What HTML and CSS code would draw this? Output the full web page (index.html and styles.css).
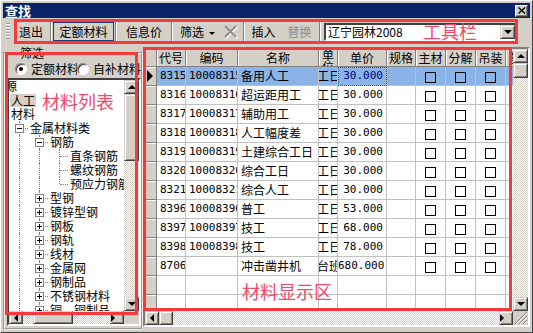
FILE: index.html
```html
<!DOCTYPE html>
<html lang="zh-CN">
<head>
  <meta charset="UTF-8" />
  <title>查找</title>
  <link rel="stylesheet" href="styles.css">
</head>
<body>
  <div class="window">
    <div class="titlebar">
      <span class="title">查找</span>
      <span class="close-btn">
        <svg width="8" height="7" viewBox="0 0 8 7"><path d="M0.5 0.5 L7 6.5 M7 0.5 L0.5 6.5" stroke="#000" stroke-width="1.4"/></svg>
      </span>
    </div>

    <div class="toolbar">
      <span class="grip"></span>
      <span class="tb-btn btn-exit">退出</span>
      <span class="tb-sep"></span>
      <span class="tb-btn btn-quota checked">定额材料</span>
      <span class="tb-sep"></span>
      <span class="tb-btn btn-info">信息价</span>
      <span class="tb-sep"></span>
      <span class="tb-btn btn-filter">筛选<i class="caret"></i></span>
      <span class="tb-btn btn-clear">
        <svg width="15" height="15" viewBox="0 0 15 15">
          <path d="M2 2 L13 13 M13 2 L2 13" stroke="#fff" stroke-width="2" transform="translate(1 1)"/>
          <path d="M2 2 L13 13 M13 2 L2 13" stroke="#8c8c8c" stroke-width="2"/>
        </svg>
      </span>
      <span class="tb-sep"></span>
      <span class="tb-btn btn-insert">插入</span>
      <span class="tb-btn btn-replace disabled">替换</span>
      <span class="tb-sep"></span>
      <div class="combo">
        <span class="combo-text">辽宁园林2008</span>
        <span class="sb-btn combo-btn"><i class="arr down"></i></span>
      </div>
    </div>

    <div class="main">
      <div class="left">
        <fieldset class="filter">
          <legend>筛选</legend>
          <div class="radios">
            <label class="radio-opt first"><span class="radio on"></span>定额材料</label>
            <label class="radio-opt second"><span class="radio"></span>自补材料</label>
          </div>
          <div class="tree-box">
            <div class="tree">
              <div class="tree-rows">
                <div class="node"><span class="t clip">源</span></div>
                <div class="node"><span class="t sel">人工</span></div>
                <div class="node"><span class="t">材料</span></div>
                <div class="node"><span class="ind v h"><i class="exp"></i></span><span class="t">金属材料类</span></div>
                <div class="node"><span class="ind v"></span><span class="ind v h"><i class="exp"></i></span><span class="t">钢筋</span></div>
                <div class="node"><span class="ind v"></span><span class="ind v"></span><span class="ind v h"></span><span class="t">直条钢筋</span></div>
                <div class="node"><span class="ind v"></span><span class="ind v"></span><span class="ind v h"></span><span class="t">螺纹钢筋</span></div>
                <div class="node"><span class="ind v"></span><span class="ind v"></span><span class="ind vt h"></span><span class="t">预应力钢筋</span></div>
                <div class="node"><span class="ind v"></span><span class="ind v h"><i class="exp plus"></i></span><span class="t">型钢</span></div>
                <div class="node"><span class="ind v"></span><span class="ind v h"><i class="exp plus"></i></span><span class="t">镀锌型钢</span></div>
                <div class="node"><span class="ind v"></span><span class="ind v h"><i class="exp plus"></i></span><span class="t">钢板</span></div>
                <div class="node"><span class="ind v"></span><span class="ind v h"><i class="exp plus"></i></span><span class="t">钢轨</span></div>
                <div class="node"><span class="ind v"></span><span class="ind v h"><i class="exp plus"></i></span><span class="t">线材</span></div>
                <div class="node"><span class="ind v"></span><span class="ind v h"><i class="exp plus"></i></span><span class="t">金属网</span></div>
                <div class="node"><span class="ind v"></span><span class="ind v h"><i class="exp plus"></i></span><span class="t">钢制品</span></div>
                <div class="node"><span class="ind v"></span><span class="ind v h"><i class="exp plus"></i></span><span class="t">不锈钢材料</span></div>
                <div class="node"><span class="ind v"></span><span class="ind v h"><i class="exp plus"></i></span><span class="t">铜、铜制品</span></div>
              </div>
            </div>
            <div class="vscroll">
              <span class="sb-btn"><i class="arr up"></i></span>
              <span class="sb-thumb tree-vthumb"></span>
              <span class="sb-track"></span>
              <span class="sb-btn"><i class="arr down"></i></span>
            </div>
            <div class="hscroll">
              <span class="sb-btn"><i class="arr left"></i></span>
              <span class="sb-track tree-htrack"></span>
              <span class="sb-thumb tree-hthumb"></span>
              <span class="sb-track"></span>
              <span class="sb-btn"><i class="arr right"></i></span>
            </div>
            <div class="corner"></div>
          </div>
        </fieldset>
      </div>

      <div class="splitter"></div>

      <div class="right">
        <div class="grid-box">
          <div class="grid-view">
            <table class="grid">
              <colgroup>
                <col class="c-rh"><col class="c-code"><col class="c-no"><col class="c-name"><col class="c-unit">
                <col class="c-price"><col class="c-spec"><col class="c-chk"><col class="c-chk"><col class="c-chk"><col class="c-more">
              </colgroup>
              <thead>
                <tr>
                  <th class="rh"></th><th>代号</th><th>编码</th><th>名称</th>
                  <th class="unit-h"><div>单位</div></th>
                  <th>单价</th><th>规格</th><th>主材</th><th>分解</th><th>吊装</th><th>备注</th>
                </tr>
              </thead>
              <tbody>
                <tr class="sel">
                  <td class="rh"><i class="ptr"></i></td><td class="mono">8315</td><td class="mono">10008315</td><td>备用人工</td>
                  <td class="unit"><span>工日</span></td><td class="mono num focus">30.000</td><td></td>
                  <td class="chk"><i></i></td><td class="chk"><i></i></td><td class="chk"><i></i></td><td></td>
                </tr>
                <tr>
                  <td class="rh"></td><td class="mono">8316</td><td class="mono">10008316</td><td>超运距用工</td>
                  <td class="unit"><span>工日</span></td><td class="mono num">30.000</td><td></td>
                  <td class="chk"><i></i></td><td class="chk"><i></i></td><td class="chk"><i></i></td><td></td>
                </tr>
                <tr>
                  <td class="rh"></td><td class="mono">8317</td><td class="mono">10008317</td><td>辅助用工</td>
                  <td class="unit"><span>工日</span></td><td class="mono num">30.000</td><td></td>
                  <td class="chk"><i></i></td><td class="chk"><i></i></td><td class="chk"><i></i></td><td></td>
                </tr>
                <tr>
                  <td class="rh"></td><td class="mono">8318</td><td class="mono">10008318</td><td>人工幅度差</td>
                  <td class="unit"><span>工日</span></td><td class="mono num">30.000</td><td></td>
                  <td class="chk"><i></i></td><td class="chk"><i></i></td><td class="chk"><i></i></td><td></td>
                </tr>
                <tr>
                  <td class="rh"></td><td class="mono">8319</td><td class="mono">10008319</td><td>土建综合工日</td>
                  <td class="unit"><span>工日</span></td><td class="mono num">30.000</td><td></td>
                  <td class="chk"><i></i></td><td class="chk"><i></i></td><td class="chk"><i></i></td><td></td>
                </tr>
                <tr>
                  <td class="rh"></td><td class="mono">8320</td><td class="mono">10008320</td><td>综合工日</td>
                  <td class="unit"><span>工日</span></td><td class="mono num">30.000</td><td></td>
                  <td class="chk"><i></i></td><td class="chk"><i></i></td><td class="chk"><i></i></td><td></td>
                </tr>
                <tr>
                  <td class="rh"></td><td class="mono">8321</td><td class="mono">10008321</td><td>综合人工</td>
                  <td class="unit"><span>工日</span></td><td class="mono num">30.000</td><td></td>
                  <td class="chk"><i></i></td><td class="chk"><i></i></td><td class="chk"><i></i></td><td></td>
                </tr>
                <tr>
                  <td class="rh"></td><td class="mono">8396</td><td class="mono">10008396</td><td>普工</td>
                  <td class="unit"><span>工日</span></td><td class="mono num">53.000</td><td></td>
                  <td class="chk"><i></i></td><td class="chk"><i></i></td><td class="chk"><i></i></td><td></td>
                </tr>
                <tr>
                  <td class="rh"></td><td class="mono">8397</td><td class="mono">10008397</td><td>技工</td>
                  <td class="unit"><span>工日</span></td><td class="mono num">68.000</td><td></td>
                  <td class="chk"><i></i></td><td class="chk"><i></i></td><td class="chk"><i></i></td><td></td>
                </tr>
                <tr>
                  <td class="rh"></td><td class="mono">8398</td><td class="mono">10008398</td><td>技工</td>
                  <td class="unit"><span>工日</span></td><td class="mono num">78.000</td><td></td>
                  <td class="chk"><i></i></td><td class="chk"><i></i></td><td class="chk"><i></i></td><td></td>
                </tr>
                <tr>
                  <td class="rh"></td><td class="mono">8706</td><td class="mono"></td><td>冲击凿井机</td>
                  <td class="unit"><span>台班</span></td><td class="mono num">680.000</td><td></td>
                  <td class="chk"><i></i></td><td class="chk"><i></i></td><td class="chk"><i></i></td><td></td>
                </tr>
                <tr>
                  <td class="rh"></td><td></td><td></td><td></td><td></td><td></td><td></td><td></td><td></td><td></td><td></td>
                </tr>
                <tr>
                  <td class="rh"></td><td></td><td></td><td></td><td></td><td></td><td></td><td></td><td></td><td></td><td></td>
                </tr>
              </tbody>
            </table>
          </div>
          <div class="vscroll">
            <span class="sb-btn"><i class="arr up"></i></span>
            <span class="sb-thumb grid-vthumb"></span>
            <span class="sb-track"></span>
            <span class="sb-btn"><i class="arr down"></i></span>
          </div>
          <div class="hscroll">
            <span class="sb-btn"><i class="arr left"></i></span>
            <span class="sb-thumb grid-hthumb"></span>
            <span class="sb-track"></span>
            <span class="sb-btn"><i class="arr right"></i></span>
          </div>
          <div class="corner">
            <svg width="15" height="14" viewBox="0 0 15 14">
              <path d="M14 1 L2 13 M14 5 L6 13 M14 9 L10 13" stroke="#808080"/>
              <path d="M14 2 L3 13 M14 6 L7 13 M14 10 L11 13" stroke="#fff"/>
            </svg>
          </div>
        </div>
      </div>
    </div>

    <!-- annotations drawn over the screenshot -->
    <div class="note-box note-toolbar"></div>
    <div class="note-box note-list"></div>
    <div class="note-box note-grid"></div>
    <span class="note-text note-toolbar-text">工具栏</span>
    <span class="note-text note-list-text">材料列表</span>
    <span class="note-text note-grid-text">材料显示区</span>
  </div>
</body>
</html>
```

FILE: styles.css
```css
:root {
  --face: #d4d0c8;
  --shadow: #808080;
  --dark: #404040;
  --title: #0a246a;
  --note: #f53a3e;
}

* {
  box-sizing: border-box;
}

body {
  margin: 0;
  background: var(--face);
  font-family: "Noto Sans CJK SC", sans-serif;
  font-size: 12px;
  color: #000;
}

.window {
  position: relative;
  width: 533px;
  height: 333px;
  padding: 2px;
  border: 1px solid;
  border-color: #fff var(--dark) var(--dark) #fff;
  background: var(--face);
  display: flex;
  flex-direction: column;
  overflow: hidden;
}

/* title bar */
.titlebar {
  height: 15px;
  flex: none;
  background: var(--title);
  display: flex;
  align-items: center;
  justify-content: space-between;
  padding-left: 2px;
}

.title {
  color: #fff;
  font-weight: bold;
  font-size: 13px;
  line-height: 15px;
}

.close-btn {
  width: 13px;
  height: 12px;
  margin-right: 2px;
  background: var(--face);
  border: 1px solid;
  border-color: #fff var(--dark) var(--dark) #fff;
  box-shadow: inset -1px -1px var(--shadow);
  display: flex;
  align-items: center;
  justify-content: center;
}

.close-btn svg {
  display: block;
}

/* toolbar */
.toolbar {
  height: 26px;
  flex: none;
  display: flex;
  align-items: flex-start;
  padding: 4px 0 0 3px;
}

.grip {
  width: 4px;
  height: 16px;
  margin: 1px 3px 0 0;
  background: repeating-linear-gradient(to bottom, #9a9a9a 0 1px, #fff 1px 2px, transparent 2px 3px);
}

.tb-btn {
  height: 19px;
  line-height: 19px;
  text-align: center;
  flex: none;
  white-space: nowrap;
}

.btn-exit { width: 36px; }
.btn-quota { width: 61px; }
.btn-info { width: 52px; }
.btn-filter { width: 44px; text-align: left; padding-left: 6px; }
.btn-clear { width: 24px; display: flex; align-items: center; justify-content: center; }
.btn-insert { width: 35px; }
.btn-replace { width: 37px; }

.tb-btn.checked {
  border: 1px solid #24366e;
  line-height: 17px;
}

.tb-btn.disabled {
  color: #8c8c8c;
}

.caret {
  display: inline-block;
  width: 0;
  height: 0;
  margin-left: 5px;
  vertical-align: middle;
  border-left: 3px solid transparent;
  border-right: 3px solid transparent;
  border-top: 3px solid #000;
}

.tb-sep {
  width: 2px;
  height: 19px;
  margin: 0 1px;
  flex: none;
  border-left: 1px solid var(--shadow);
  border-right: 1px solid #fff;
}

.combo {
  width: 193px;
  height: 18px;
  margin: 1px 0 0 2px;
  background: #fff;
  border: 2px solid;
  border-color: var(--dark) #fff #fff var(--dark);
  display: flex;
  align-items: center;
}

.combo-text {
  padding-left: 2px;
  line-height: 14px;
}

.combo-btn {
  margin-left: auto;
  width: 15px;
  height: 14px;
}

/* main area */
.main {
  flex: 1;
  min-height: 0;
  display: flex;
}

.left {
  width: 136px;
  flex: none;
  display: flex;
  flex-direction: column;
}

.filter {
  flex: 1;
  min-height: 0;
  margin: 0;
  padding: 0 0 2px 2px;
  border: 2px groove #eeece8;
  display: flex;
  flex-direction: column;
}

.filter legend {
  margin-left: 11px;
  padding: 0 2px;
  line-height: 17px;
}

.radios {
  height: 16px;
  padding-left: 8px;
  display: flex;
  align-items: center;
  white-space: nowrap;
}

.radio-opt {
  display: flex;
  align-items: center;
  gap: 4px;
  overflow: hidden;
  line-height: 14px;
}

.radio-opt.first {
  width: 62px;
  flex: none;
}

.radio-opt.second {
  flex: 1;
  min-width: 0;
}

.radio {
  position: relative;
  width: 12px;
  height: 12px;
  flex: none;
  border-radius: 50%;
  background: #fff;
  border: 1px solid;
  border-color: var(--shadow) #fff #fff var(--shadow);
  box-shadow: inset 1px 1px var(--dark);
}

.radio.on::after {
  content: "";
  position: absolute;
  left: 3px;
  top: 3px;
  width: 4px;
  height: 4px;
  border-radius: 50%;
  background: #000;
}

/* tree */
.tree-box {
  flex: 1;
  min-height: 0;
  margin-top: 1px;
  border: 2px solid;
  border-color: var(--dark) #fff #fff var(--dark);
  display: grid;
  grid-template-columns: 1fr 15px;
  grid-template-rows: 1fr 13px;
}

.tree {
  background: #fff;
  overflow: hidden;
  min-width: 0;
}

.tree-rows {
  margin-top: -1px;
}

.node {
  height: 14px;
  line-height: 14px;
  display: flex;
  white-space: nowrap;
}

.node .t {
  padding-left: 1px;
}

.node > .t:first-child {
  margin-left: 1px;
}

.node .t.clip {
  margin-left: -5px;
}

.node .t.sel {
  background: var(--face);
  padding: 0 1px;
  height: 13px;
  line-height: 13px;
  margin-top: 1px;
}

.ind {
  position: relative;
  width: 20px;
  height: 14px;
  flex: none;
}

.ind.v::before,
.ind.vt::before {
  content: "";
  position: absolute;
  left: 10px;
  top: 0;
  bottom: 0;
  border-left: 1px dotted var(--shadow);
}

.ind.vt::before {
  bottom: 7px;
}

.ind.h::after {
  content: "";
  position: absolute;
  left: 11px;
  right: 1px;
  top: 7px;
  border-top: 1px dotted var(--shadow);
}

.exp {
  position: absolute;
  z-index: 1;
  left: 6px;
  top: 3px;
  width: 9px;
  height: 9px;
  border: 1px solid var(--shadow);
  background: #fff;
}

.exp::before {
  content: "";
  position: absolute;
  left: 1px;
  top: 3px;
  width: 5px;
  height: 1px;
  background: #000;
}

.exp.plus::after {
  content: "";
  position: absolute;
  left: 3px;
  top: 1px;
  width: 1px;
  height: 5px;
  background: #000;
}

/* scroll bars */
.vscroll {
  display: flex;
  flex-direction: column;
  min-height: 0;
}

.hscroll {
  display: flex;
  min-width: 0;
}

.sb-btn,
.sb-thumb {
  flex: none;
  background: var(--face);
  border: 1px solid;
  border-color: var(--face) var(--dark) var(--dark) var(--face);
  box-shadow: inset 1px 1px #fff, inset -1px -1px var(--shadow);
  display: flex;
  align-items: center;
  justify-content: center;
}

.vscroll .sb-btn { height: 14px; }
.hscroll .sb-btn { width: 14px; }

.sb-track {
  flex: 1;
  background: repeating-conic-gradient(var(--face) 0 25%, #fff 0 50%) 0 0 / 2px 2px;
}

.tree-vthumb { height: 67px; }
.grid-vthumb { height: 15px; }
.tree-htrack { flex: none; width: 10px; }
.tree-hthumb { width: 40px; }
.grid-hthumb { width: 14px; }

.corner {
  background: var(--face);
}

.corner svg {
  display: block;
}

.arr {
  width: 0;
  height: 0;
}

.arr.up {
  border-left: 4px solid transparent;
  border-right: 4px solid transparent;
  border-bottom: 4px solid #000;
}

.arr.down {
  border-left: 4px solid transparent;
  border-right: 4px solid transparent;
  border-top: 4px solid #000;
}

.arr.left {
  border-top: 4px solid transparent;
  border-bottom: 4px solid transparent;
  border-right: 4px solid #000;
}

.arr.right {
  border-top: 4px solid transparent;
  border-bottom: 4px solid transparent;
  border-left: 4px solid #000;
}

.splitter {
  width: 4px;
  flex: none;
}

/* material grid */
.right {
  flex: 1;
  min-width: 0;
  display: flex;
}

.grid-box {
  flex: 1;
  min-width: 0;
  margin: 3px 0;
  border: 2px solid;
  border-color: var(--shadow) #fff #fff var(--shadow);
  display: grid;
  grid-template-columns: 1fr 15px;
  grid-template-rows: 1fr 14px;
}

.grid-view {
  overflow: hidden;
  background: #fff;
  min-width: 0;
}

.grid {
  table-layout: fixed;
  border-spacing: 0;
  width: 391px;
}

.c-rh { width: 12px; }
.c-code { width: 29px; }
.c-no { width: 52px; }
.c-name { width: 81px; }
.c-unit { width: 19px; }
.c-price { width: 49px; }
.c-spec { width: 29px; }
.c-chk { width: 30px; }
.c-more { width: 30px; }

.grid th,
.grid td {
  height: 19px;
  padding: 0 0 0 3px;
  border-right: 1px solid #c0c0c0;
  border-bottom: 1px solid #c0c0c0;
  white-space: nowrap;
  overflow: hidden;
  line-height: 18px;
  text-align: left;
  font-weight: normal;
}

.grid th {
  height: 18px;
  line-height: 17px;
  padding: 0;
  text-align: center;
  background: var(--face);
  border-color: var(--shadow);
  box-shadow: inset 1px 1px #fff;
}

.grid th.unit-h div {
  height: 17px;
  overflow: hidden;
  white-space: normal;
  line-height: 12px;
  word-break: break-all;
}

.grid .rh {
  padding: 0;
  background: var(--face);
  border-color: var(--shadow);
  box-shadow: inset 1px 1px #fff;
}

.ptr {
  display: block;
  width: 0;
  height: 0;
  margin-left: 2px;
  border-top: 6px solid transparent;
  border-bottom: 6px solid transparent;
  border-left: 6px solid #000;
}

.grid td.mono {
  font-family: "DejaVu Sans Mono", monospace;
  font-size: 11px;
}

.grid td.num {
  text-align: right;
  padding: 0 3px 0 0;
}

.grid td.unit {
  padding: 0;
}

.grid td.unit span {
  display: block;
  width: 26px;
  margin-left: -2px;
}

.grid td.chk {
  padding: 0;
  text-align: center;
}

.grid td.chk i {
  display: inline-block;
  width: 11px;
  height: 11px;
  border: 1px solid #000;
  vertical-align: middle;
}

.grid tr.sel td:not(.rh) {
  background: #8ab4e8;
}

.grid td.focus {
  color: #000080;
  outline: 1px dotted #4d5a1e;
  outline-offset: -1px;
}

/* red annotations */
.note-box {
  position: absolute;
  border: 3px solid var(--note);
  pointer-events: none;
}

.note-toolbar { left: 13px; top: 18px; width: 504px; height: 25px; }
.note-list { left: 4px; top: 51px; width: 133px; height: 263px; }
.note-grid { left: 142px; top: 46px; width: 369px; height: 264px; }

.note-text {
  position: absolute;
  color: #f8456a;
  font-size: 18px;
  line-height: 18px;
  white-space: nowrap;
  pointer-events: none;
}

.note-toolbar-text { left: 422px; top: 21px; }
.note-list-text { left: 41px; top: 91px; }
.note-grid-text { left: 241px; top: 281px; }
```
